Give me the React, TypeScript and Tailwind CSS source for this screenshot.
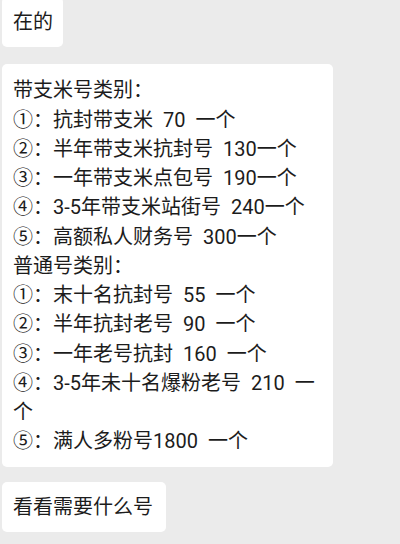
import React from 'react';

const font = { fontFamily: 'Roboto, "Noto Sans CJK SC", sans-serif' };

const firstGroup = [
    '①：抗封带支米 70 一个',
    '②：半年带支米抗封号 130一个',
    '③：一年带支米点包号 190一个',
    '④：3-5年带支米站街号 240一个',
    '⑤：高额私人财务号 300一个',
];

const secondGroup = [
    '①：末十名抗封号 55 一个',
    '②：半年抗封老号 90 一个',
    '③：一年老号抗封 160 一个',
];

const Bubble: React.FC<{ children: React.ReactNode; className?: string }> = ({ children, className = '' }) => (
    <div className={`bg-white rounded-[5px] pl-[11px] text-[20px] leading-[29.25px] text-[#1c1c1c] whitespace-nowrap [text-spacing-trim:space-all] [word-spacing:5px] ${className}`}>
        {children}
    </div>
);

export default function App() {
    return (
        <div lang="zh-CN" className="w-[400px] h-[544px] bg-[#ebebeb] overflow-hidden flex flex-col items-start pl-[2px]" style={font}>
            {/* first short reply */}
            <Bubble className="-mt-[3px] pt-[11px] pb-[10px] pr-[10px]">在的</Bubble>

            {/* price list */}
            <Bubble className="mt-[17px] w-[331px] pt-[12px] pb-[10px]">
                <div>带支米号类别：</div>
                {firstGroup.map((line) => (
                    <div key={line}>{line}</div>
                ))}
                <div>普通号类别：</div>
                {secondGroup.map((line) => (
                    <div key={line}>{line}</div>
                ))}
                <div>
                    ④：3-5年未十名爆粉老号 210 一
                    <br />个
                </div>
                <div>⑤：满人多粉号1800 一个</div>
            </Bubble>

            {/* closing question */}
            <Bubble className="mt-[15px] pt-[11px] pb-[10px] pr-[13px]">看看需要什么号</Bubble>
        </div>
    );
}
